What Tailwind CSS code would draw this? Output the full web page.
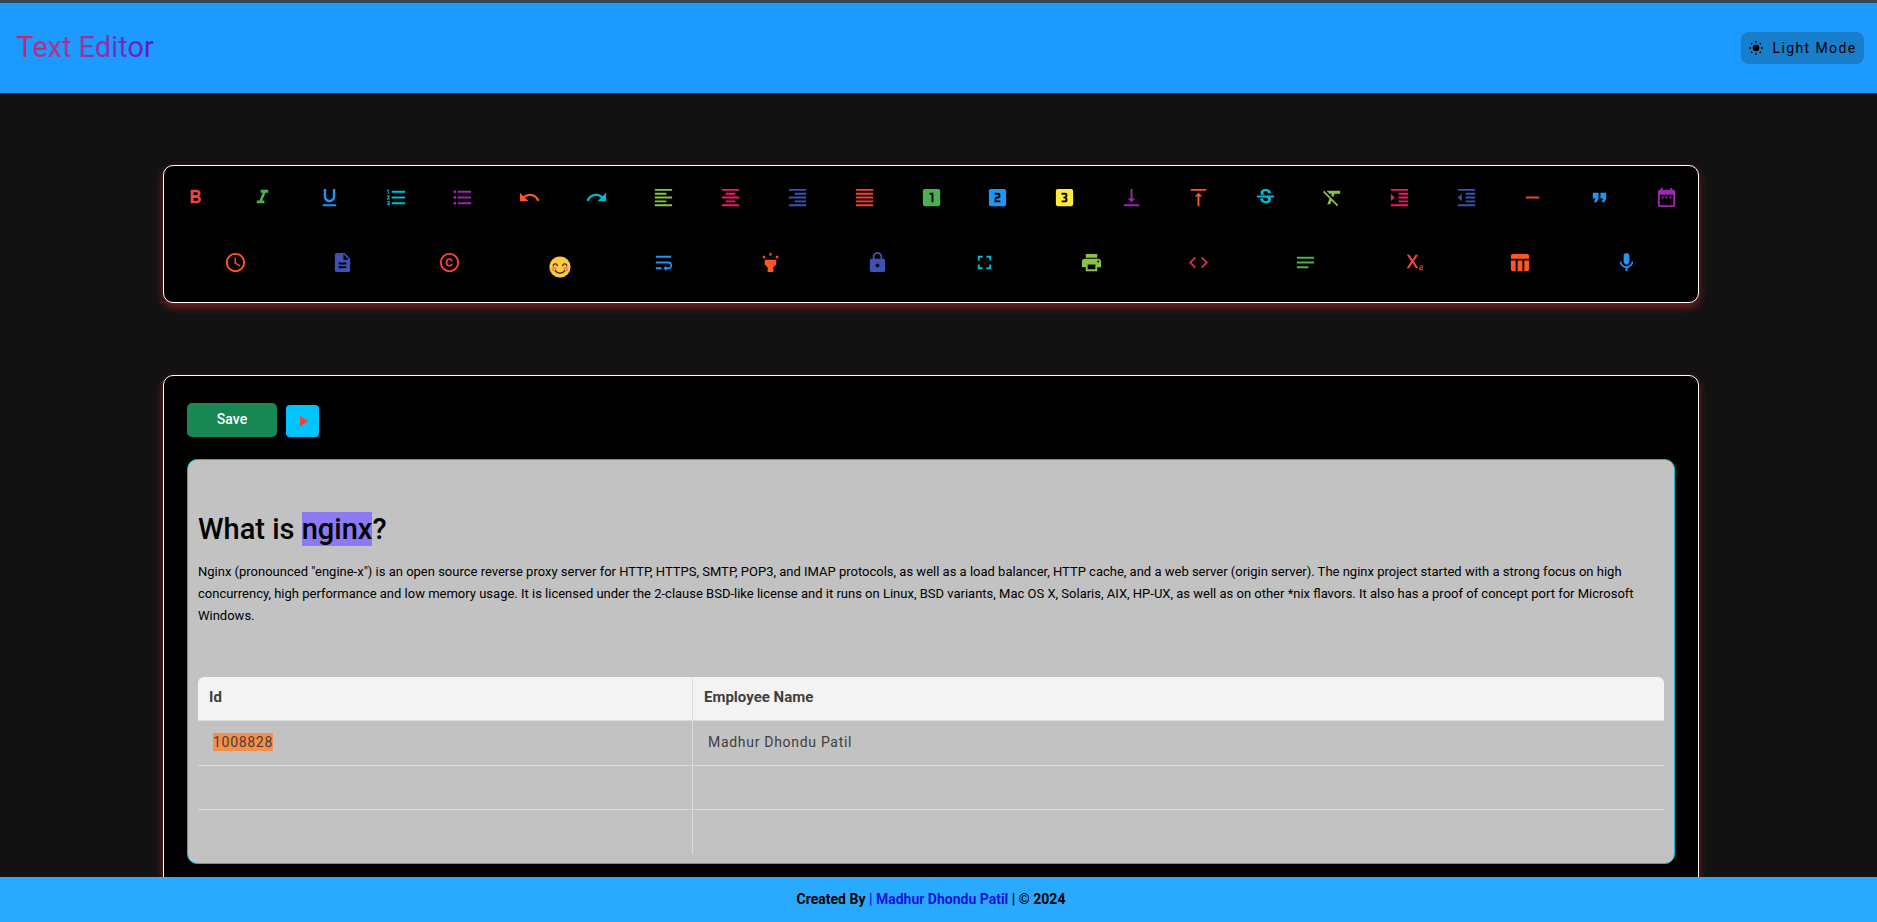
<!DOCTYPE html>
<html lang="en">
<head>
<meta charset="utf-8">
<meta name="viewport" content="width=device-width, initial-scale=1">
<title>Text Editor</title>
<script src="https://cdn.jsdelivr.net/npm/@tailwindcss/browser@4"></script>
</head>
<body class="flex h-screen flex-col overflow-hidden bg-[#121212] font-[Roboto,sans-serif] text-black">

<header class="flex h-[93px] shrink-0 items-center justify-between border-t-3 border-[#2e4a50] bg-[#1c9aff] pr-[13px] pl-4">
  <h1 class="bg-linear-to-r from-[#d81b60] to-[#6010c8] bg-clip-text pb-0.5 text-[29px] leading-9 font-normal text-transparent">Text Editor</h1>
  <button type="button" class="flex h-8 w-[123px] items-center justify-center gap-2 rounded-lg bg-[#187dcb] text-sm tracking-widest">
    <svg class="size-4 shrink-0" viewBox="0 0 16 16" fill="none" stroke="currentColor" stroke-width="1.6" aria-hidden="true"><circle cx="8" cy="8" r="3.3" fill="currentColor" stroke="none"/><path d="M8 1v1.800M8 13.200V15M1 8h1.800M13.200 8H15M3.200 3.200l1 1M11.800 11.800l1 1M3.200 12.800l1-1M11.800 4.200l1-1"/></svg>
    Light Mode
  </button>
</header>

<main class="min-h-0 flex-1 overflow-y-auto pt-[72px] pr-[15px] [scrollbar-width:none]">
  <div class="mx-auto flex max-w-[1536px] flex-col gap-[72px]">

    <section aria-label="Formatting tools" class="flex flex-col gap-0.5 rounded-[10px] border border-white bg-black pb-2 shadow-[0_4px_8px_#7f2020]">
      <div id="row1" class="-mx-0.5 flex h-[63px] items-center *:flex *:h-10 *:flex-1 *:items-center *:justify-center"></div>
      <div id="row2" class="flex h-[63px] items-center px-[18px] *:flex *:h-10 *:flex-1 *:items-center *:justify-center"></div>
    </section>

    <section aria-label="Document" class="rounded-[10px] border border-white bg-black px-[23px] pt-[27px] pb-20 shadow-[0_4px_8px_#7f2020]">
      <div class="flex items-end gap-[9px]">
        <button type="button" class="h-[34px] w-[90px] rounded-[5px] bg-[#198754] pb-0.5 text-sm font-medium text-white">Save</button>
        <button type="button" aria-label="Play" class="flex h-8 w-[33px] items-center justify-center rounded bg-[#00c3ff]">
          <svg class="size-[18px] text-[#f44336]" viewBox="0 0 24 24" fill="currentColor"><path d="M8 5v14l11-7z"/></svg>
        </button>
      </div>

      <div contenteditable="true" spellcheck="false" class="mt-[22px] rounded-[10px] border border-[#00bcd4] bg-[#c2c2c2] px-2.5 pt-[51px] pb-[9px] outline-none">
        <h2 class="text-[29px] leading-9 font-medium">What is <span class="bg-[#8d7af2]">nginx</span>?</h2>
        <p class="mt-3.5 text-[13px] leading-[22px]">Nginx (pronounced "engine-x") is an open source reverse proxy server for HTTP, HTTPS, SMTP, POP3, and IMAP protocols, as well as a load balancer, HTTP cache, and a web server (origin server). The nginx project started with a strong focus on high concurrency, high performance and low memory usage. It is licensed under the 2-clause BSD-like license and it runs on Linux, BSD variants, Mac OS X, Solaris, AIX, HP-UX, as well as on other *nix flavors. It also has a proof of concept port for Microsoft Windows.</p>
        <table class="mt-[50px] w-full table-fixed border-separate border-spacing-0 text-left text-sm text-[#3f3f3f]">
          <colgroup><col class="w-[495px]"><col></colgroup>
          <thead>
            <tr class="h-11 text-[15px] *:border-b *:border-[#dcdcdc] *:bg-[#f4f4f4] *:px-[11px] *:pb-0.5 *:font-bold">
              <th scope="col" class="rounded-tl-md border-r">Id</th>
              <th scope="col" class="rounded-tr-md">Employee Name</th>
            </tr>
          </thead>
          <tbody class="tracking-wider">
            <tr class="h-[45px] *:border-b *:border-[#dcdcdc] *:px-[15px] *:pb-0.5">
              <td class="border-r"><span class="bg-[#f58f49] py-px">1008828</span></td>
              <td>Madhur Dhondu Patil</td>
            </tr>
            <tr class="h-11 *:border-b *:border-[#dcdcdc]"><td class="border-r"></td><td></td></tr>
            <tr class="h-11 *:border-[#dcdcdc]"><td class="border-r"></td><td></td></tr>
          </tbody>
        </table>
      </div>
    </section>
  </div>
</main>

<footer class="flex h-[45px] shrink-0 items-center justify-center bg-[#29aaff] pr-[15px] pb-0.5 text-sm font-bold">
  <p>Created By <a href="#" class="text-[#1414dc]">| Madhur Dhondu Patil</a> | © 2024</p>
</footer>

<script>
const row1 = [
  ["Bold", "#f44336", "M15.6 10.79c.97-.67 1.65-1.77 1.65-2.79 0-2.26-1.75-4-4-4H7v14h7.04c2.09 0 3.71-1.7 3.71-3.79 0-1.52-.86-2.82-2.15-3.42zM10 6.5h3c.83 0 1.5.67 1.5 1.5s-.67 1.5-1.5 1.5h-3v-3zm3.5 9H10v-3h3.5c.83 0 1.5.67 1.5 1.5s-.67 1.5-1.5 1.5z"],
  ["Italic", "#4caf50", "M10 4v3h2.21l-3.42 8H6v3h8v-3h-2.21l3.42-8H18V4z"],
  ["Underline", "#2196f3", "M12 17c3.31 0 6-2.69 6-6V3h-2.5v8c0 1.93-1.57 3.5-3.5 3.5S8.5 12.93 8.5 11V3H6v8c0 3.31 2.69 6 6 6zm-7 2v2h14v-2H5z"],
  ["Numbered list", "#00bcd4", "M2 17h2v.5H3v1h1v.5H2v1h3v-4H2v1zm1-9h1V4H2v1h1v3zm-1 3h1.8L2 13.1v.9h3v-1H3.2L5 10.9V10H2v1zm5-6v2h14V5H7zm0 14h14v-2H7v2zm0-6h14v-2H7v2z"],
  ["Bulleted list", "#9c27b0", "M4 10.5c-.83 0-1.5.67-1.5 1.5s.67 1.5 1.5 1.5 1.5-.67 1.5-1.5-.67-1.5-1.5-1.5zm0-6c-.83 0-1.5.67-1.5 1.5S3.17 7.5 4 7.5 5.5 6.83 5.5 6 4.83 4.5 4 4.5zm0 12c-.83 0-1.5.68-1.5 1.5s.68 1.5 1.5 1.5 1.5-.68 1.5-1.5-.67-1.5-1.5-1.5zM7 19h14v-2H7v2zm0-6h14v-2H7v2zm0-8v2h14V5H7z"],
  ["Undo", "#ff5722", "M12.5 8c-2.65 0-5.05.99-6.9 2.6L2 7v9h9l-3.62-3.62c1.39-1.16 3.16-1.88 5.12-1.88 3.54 0 6.55 2.31 7.6 5.5l2.37-.78C21.08 11.03 17.15 8 12.5 8z"],
  ["Redo", "#00bcd4", "M18.4 10.6C16.55 8.99 14.15 8 11.5 8c-4.65 0-8.58 3.03-9.96 7.22L3.9 16c1.05-3.19 4.05-5.5 7.6-5.5 1.95 0 3.73.72 5.12 1.88L13 16h9V7l-3.6 3.6z"],
  ["Align left", "#8bc34a", "M15 15H3v2h12v-2zm0-8H3v2h12V7zM3 13h18v-2H3v2zm0 8h18v-2H3v2zM3 3v2h18V3H3z"],
  ["Align center", "#e91e63", "M7 15v2h10v-2H7zm-4 6h18v-2H3v2zm0-8h18v-2H3v2zm4-6v2h10V7H7zM3 3v2h18V3H3z"],
  ["Align right", "#3f51b5", "M3 21h18v-2H3v2zm6-4h12v-2H9v2zm-6-4h18v-2H3v2zm6-4h12V7H9v2zM3 3v2h18V3H3z"],
  ["Justify", "#f44336", "M3 21h18v-2H3v2zm0-4h18v-2H3v2zm0-4h18v-2H3v2zm0-4h18V7H3v2zm0-6v2h18V3H3z"],
  ["Heading 1", "#4caf50", "M19 3H5c-1.1 0-2 .9-2 2v14c0 1.1.9 2 2 2h14c1.1 0 2-.9 2-2V5c0-1.1-.9-2-2-2zm-5 14h-2V9h-2V7h4v10z"],
  ["Heading 2", "#2196f3", "M19 3H5c-1.1 0-2 .9-2 2v14c0 1.1.9 2 2 2h14c1.1 0 2-.9 2-2V5c0-1.1-.9-2-2-2zm-4 8c0 1.11-.9 2-2 2h-2v2h4v2H9v-4c0-1.11.9-2 2-2h2V9H9V7h4c1.1 0 2 .89 2 2v2z"],
  ["Heading 3", "#ffeb3b", "M19.01 3h-14c-1.1 0-2 .9-2 2v14c0 1.1.9 2 2 2h14c1.1 0 2-.9 2-2V5c0-1.1-.9-2-2-2zm-4 7.5c0 .83-.67 1.5-1.5 1.5.83 0 1.5.67 1.5 1.5V15c0 1.11-.9 2-2 2h-4v-2h4v-2h-2v-2h2V9h-4V7h4c1.1 0 2 .89 2 2v1.5z"],
  ["Align bottom", "#9c27b0", "M16 13h-3V3h-2v10H8l4 4 4-4zM4 19v2h16v-2H4z"],
  ["Align top", "#ff5722", "M8 11h3v10h2V11h3l-4-4-4 4zM4 3v2h16V3H4z"],
  ["Strikethrough", "#00bcd4", "M6.85 7.08C6.85 4.37 9.45 3 12.24 3c1.64 0 3 .49 3.9 1.28.77.65 1.46 1.73 1.46 3.24h-3.01c0-.31-.05-.59-.15-.85-.29-.86-1.2-1.28-2.25-1.28-1.86 0-2.34 1.02-2.34 1.7 0 .48.25.88.74 1.21.38.25.77.48 1.41.7H7.39c-.21-.34-.54-.89-.54-1.92zM21 12v-2H3v2h9.62c1.15.45 1.96.75 1.96 1.97 0 1-.81 1.67-2.28 1.67-1.54 0-2.93-.54-2.93-2.51H6.4c0 .55.08 1.13.24 1.58.81 2.29 3.29 3.3 5.67 3.3 2.27 0 5.3-.89 5.3-4.05 0-.3-.01-1.16-.48-1.94H21V12z"],
  ["Clear formatting", "#8bc34a", "M3.27 5 2 6.27l6.97 6.97L6.5 19h3l1.57-3.66L16.73 21 18 19.73 3.55 5.27 3.27 5zM6 5v.18L8.82 8h2.4l-.72 1.68 2.1 2.1L14.21 8H20V5H6z"],
  ["Increase indent", "#e91e63", "M3 21h18v-2H3v2zM3 8v8l4-4-4-4zm8 9h10v-2H11v2zM3 3v2h18V3H3zm8 6h10V7H11v2zm0 4h10v-2H11v2z"],
  ["Decrease indent", "#3f51b5", "M11 17h10v-2H11v2zm-8-5 4 4V8l-4 4zm0 9h18v-2H3v2zM3 3v2h18V3H3zm8 6h10V7H11v2zm0 4h10v-2H11v2z"],
  ["Horizontal rule", "#f44336", "M19 13H5v-2h14v2z"],
  ["Quote", "#2196f3", "M6 17h3l2-4V7H5v6h3zm8 0h3l2-4V7h-6v6h3z"],
  ["Insert date", "#9c27b0", "M9 11H7v2h2v-2zm4 0h-2v2h2v-2zm4 0h-2v2h2v-2zm2-7h-1V2h-2v2H8V2H6v2H5c-1.11 0-1.99.9-1.99 2L3 20c0 1.1.89 2 2 2h14c1.1 0 2-.9 2-2V6c0-1.1-.9-2-2-2zm0 16H5V9h14v11z"]
];
const row2 = [
  ["Insert time", "#ff5722", "M11.99 2C6.47 2 2 6.48 2 12s4.47 10 9.99 10C17.52 22 22 17.52 22 12S17.52 2 11.99 2zM12 20c-4.42 0-8-3.58-8-8s3.58-8 8-8 8 3.58 8 8-3.58 8-8 8zM12.5 7H11v6l5.25 3.15.75-1.23-4.5-2.67z"],
  ["Document", "#3f51b5", "M14 2H6c-1.1 0-1.99.9-1.99 2L4 20c0 1.1.89 2 1.99 2H18c1.1 0 2-.9 2-2V8l-6-6zm2 16H8v-2h8v2zm0-4H8v-2h8v2zm-3-5V3.5L18.5 9H13z"],
  ["Copyright", "#f44336", "M10.08 10.86c.05-.33.16-.62.3-.87s.34-.46.59-.62c.24-.15.54-.22.91-.23.23.01.44.05.63.13.2.09.38.21.52.36s.25.33.34.53.13.42.14.64h1.79c-.02-.47-.11-.9-.28-1.29s-.4-.73-.7-1.01-.66-.5-1.08-.66-.88-.23-1.39-.23c-.65 0-1.22.11-1.7.34s-.88.53-1.2.92-.56.84-.71 1.36S8 11.29 8 11.87v.27c0 .58.08 1.12.23 1.64s.39.97.71 1.35.72.69 1.2.91 1.05.34 1.7.34c.47 0 .91-.08 1.32-.23s.77-.36 1.08-.63.56-.58.74-.94.29-.74.3-1.15h-1.79c-.01.21-.06.4-.15.58s-.21.33-.36.46-.32.23-.52.3c-.19.07-.39.09-.6.1-.36-.01-.66-.08-.89-.23-.25-.16-.45-.37-.59-.62s-.25-.55-.3-.88-.08-.67-.08-1v-.27c0-.35.03-.68.08-1.01zM12 2C6.48 2 2 6.48 2 12s4.48 10 10 10 10-4.48 10-10S17.52 2 12 2zm0 18c-4.41 0-8-3.59-8-8s3.59-8 8-8 8 3.59 8 8-3.59 8-8 8z"],
  ["Emoji"],
  ["Wrap text", "#2196f3", "M4 19h6v-2H4v2zM20 5H4v2h16V5zm-3 6H4v2h13.25c1.1 0 2 .9 2 2s-.9 2-2 2H15v-2l-3 3 3 3v-2h2c2.21 0 4-1.79 4-4s-1.79-4-4-4z"],
  ["Highlight", "#ff5722", "M6 14l3 3v5h6v-5l3-3V9H6v5zm5-12h2v3h-2zM3.5 5.875L4.914 4.46l2.12 2.122L5.62 7.997zm13.46.71l2.123-2.12 1.414 1.414L18.375 8z"],
  ["Lock", "#3f51b5", "M18 8h-1V6c0-2.76-2.24-5-5-5S7 3.24 7 6v2H6c-1.1 0-2 .9-2 2v10c0 1.1.9 2 2 2h12c1.1 0 2-.9 2-2V10c0-1.1-.9-2-2-2zm-6 9c-1.1 0-2-.9-2-2s.9-2 2-2 2 .9 2 2-.9 2-2 2zm3.1-9H8.9V6c0-1.71 1.39-3.1 3.1-3.1 1.71 0 3.1 1.39 3.1 3.1v2z"],
  ["Fullscreen", "#00bcd4", "M7 14H5v5h5v-2H7v-3zm-2-4h2V7h3V5H5v5zm12 7h-3v2h5v-5h-2v3zM14 5v2h3v3h2V5h-5z"],
  ["Print", "#8bc34a", "M19 8H5c-1.66 0-3 1.34-3 3v6h4v4h12v-4h4v-6c0-1.66-1.34-3-3-3zm-3 11H8v-5h8v5zm3-7c-.55 0-1-.45-1-1s.45-1 1-1 1 .45 1 1-.45 1-1 1zm-1-9H6v4h12V3z"],
  ["Code", "#e91e63", "M9.4 16.6 4.8 12l4.6-4.6L8 6l-6 6 6 6 1.4-1.4zm5.2 0 4.6-4.6-4.6-4.6L16 6l6 6-6 6-1.4-1.4z"],
  ["Notes", "#4caf50", "M3 18h12v-2H3v2zM3 6v2h18V6H3zm0 7h18v-2H3v2z"],
  ["Subscript", "#f44336", "M22 18h-2v1h3v1h-4v-2c0-.55.45-1 1-1h2v-1h-3v-1h3c.55 0 1 .45 1 1v1c0 .55-.45 1-1 1zM5.88 18h2.66l3.4-5.42h.12l3.4 5.42h2.66l-4.65-7.27L17.81 4h-2.68l-3.07 4.99h-.12L8.85 4H6.19l4.32 6.73L5.88 18z"],
  ["Insert table", "#ff5722", "M10 10.02h5V21h-5zM17 21h3c1.1 0 2-.9 2-2v-9h-5v11zm3-18H5c-1.1 0-2 .9-2 2v3h19V5c0-1.1-.9-2-2-2zM3 19c0 1.1.9 2 2 2h3V10H3v9z"],
  ["Dictate", "#2196f3", "M12 14c1.66 0 2.99-1.34 2.99-3L15 5c0-1.66-1.34-3-3-3S9 3.34 9 5v6c0 1.66 1.34 3 3 3zm5.3-3c0 3-2.54 5.1-5.3 5.1S6.7 14 6.7 11H5c0 3.41 2.72 6.23 6 6.72V21h2v-3.28c3.28-.48 6-3.3 6-6.72h-1.7z"]
];
const emoji = '<svg class="mt-2 ml-1.5 size-[22px]" viewBox="0 0 22 22" fill="none" stroke-linecap="round"><circle cx="11" cy="11" r="10.6" fill="#ffc93c"/><circle cx="5" cy="13" r="2.5" fill="#f58f4a"/><circle cx="17" cy="13" r="2.5" fill="#f58f4a"/><path d="M4.2 9.6C4.6 7.4 8 7.4 8.4 9.6M13.6 9.6C14 7.4 17.4 7.4 17.8 9.6M6.5 14.8C8.5 17.8 13.5 17.8 15.5 14.8" stroke="#2b2a20" stroke-width="1.3"/></svg>';
const draw = (id, tools) => {
  document.getElementById(id).innerHTML = tools.map(([name, color, path]) =>
    '<button type="button" aria-label="' + name + '">' +
    (path ? '<svg class="size-[23px]" viewBox="0 0 24 24" fill="' + color + '"><path d="' + path + '"/></svg>' : emoji) +
    '</button>').join("");
};
draw("row1", row1);
draw("row2", row2);
</script>
</body>
</html>
